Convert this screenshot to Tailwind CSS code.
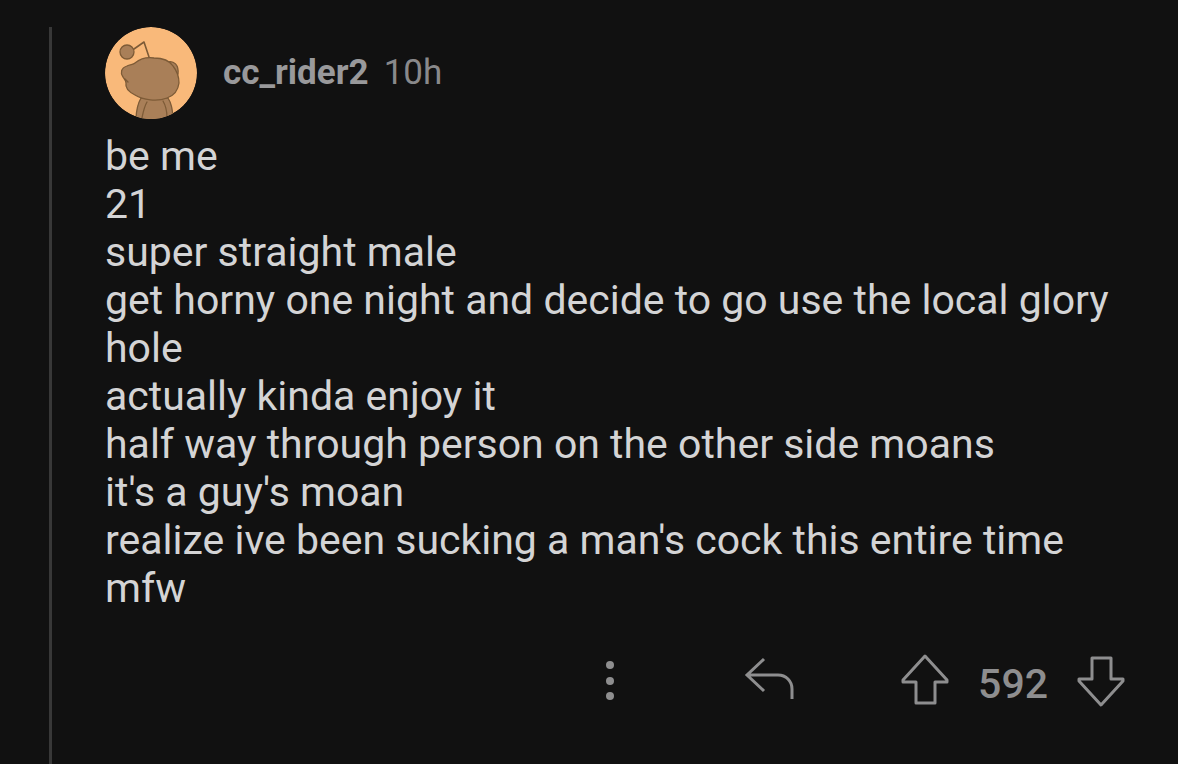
<!DOCTYPE html>
<html lang="en">
<head>
    <meta charset="UTF-8">
    <meta name="viewport" content="width=device-width, initial-scale=1.0">
    <title>Comment by cc_rider2</title>
    <script src="https://cdn.jsdelivr.net/npm/@tailwindcss/browser@4"></script>
</head>
<body class="bg-[#111111] font-['Roboto',sans-serif] text-[#d4d4d5]">
    <main class="flex min-h-screen pt-[27px] pl-[49px] pr-[52px]">
        <article class="flex-1 min-w-0 border-l-3 border-[#383838] pl-[53px]">
            <header class="flex items-center gap-[26px]">
                <svg class="size-[92px] rounded-full shrink-0" viewBox="0 0 92 92" role="img" aria-label="Avatar">
                    <circle cx="46" cy="46" r="46" fill="#f9b97a"/>
                    <g fill="#a97f58" stroke="#7d5b37" stroke-width="1.3" stroke-linecap="round" stroke-linejoin="round">
                        <path d="M31 94C31 84 32 78 36 71H63C67 77 68 84 68 94Z"/>
                        <path d="M42 75C39 80 38 86 37 91M58 74C61 79 62 85 62 91" fill="none"/>
                        <path d="M62 35C69 33 74 38 73 47L68 50Z"/>
                        <path d="M22 39C25 37 28 38 30 36C35 32 42 30 49 31C57 31 64 33 68 39C72 44 74 50 74 56C73 64 68 69 62 71C52 75 38 73 30 68C24 65 20 61 21 56C21 53 19 52 18 50C15 46 16 41 22 39Z"/>
                        <path d="M20 52L23 55" fill="none"/>
                        <path d="M29 22L39 15L44 30" fill="none" stroke-width="1.6"/>
                        <circle cx="22" cy="25" r="7"/>
                    </g>
                </svg>
                <p class="flex gap-[15px] text-[35px] leading-[48px] text-[#89898b]">
                    <a href="#" class="font-bold text-[#99999b]">cc_rider2</a>
                    <time>10h</time>
                </p>
            </header>
            <div class="mt-[13px] text-[41px] leading-[48px]">
                <p>be me</p>
                <p>21</p>
                <p>super straight male</p>
                <p>get horny one night and decide to go use the local glory hole</p>
                <p>actually kinda enjoy it</p>
                <p>half way through person on the other side moans</p>
                <p>it's a guy's moan</p>
                <p>realize ive been sucking a man's cock this entire time</p>
                <p>mfw</p>
            </div>
            <footer class="mt-[40px] flex items-center justify-end text-[#8e8e8f]">
                <button type="button" aria-label="More options" class="mr-[106px]">
                    <svg class="size-[56px]" viewBox="0 0 56 56" fill="currentColor">
                        <circle cx="28" cy="13" r="4"/>
                        <circle cx="28" cy="29" r="4"/>
                        <circle cx="28" cy="44" r="4"/>
                    </svg>
                </button>
                <button type="button" aria-label="Reply" class="mr-[106px]">
                    <svg class="w-[50px] h-[56px]" viewBox="0 0 50 56" fill="none" stroke="currentColor" stroke-width="3">
                        <path d="M20 7L3 23L20 39M3 23H34C42 23 48 29 48 37V47"/>
                    </svg>
                </button>
                <div class="flex items-end gap-[28px]">
                    <button type="button" aria-label="Upvote">
                        <svg class="w-[50px] h-[56px]" viewBox="0 0 50 56" fill="none" stroke="currentColor" stroke-width="3" stroke-linejoin="round">
                            <path d="M25 4L47 28V30H35V51H16V30H3V28Z"/>
                        </svg>
                    </button>
                    <span class="text-[41px] leading-[48px] font-medium">592</span>
                    <button type="button" aria-label="Downvote">
                        <svg class="w-[50px] h-[56px]" viewBox="0 0 50 56" fill="none" stroke="currentColor" stroke-width="3" stroke-linejoin="round">
                            <path d="M25 53L47 29V27H35V6H16V27H3V29Z"/>
                        </svg>
                    </button>
                </div>
            </footer>
        </article>
    </main>
</body>
</html>
